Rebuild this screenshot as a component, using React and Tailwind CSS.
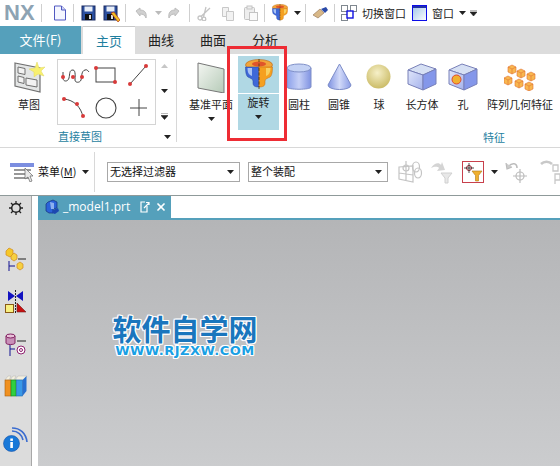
import { X } from 'lucide-react'

const font = { fontFamily: '"Noto Sans CJK SC", "Liberation Sans", sans-serif' }

// small filled dropdown triangle
function Caret({ className = '' }) {
  return (
    <svg width="7" height="4" viewBox="0 0 7 4" className={`shrink-0 ${className}`}>
      <path d="M0 0h7L3.5 4z" fill="#222" />
    </svg>
  )
}

function Sep({ className = '' }) {
  return <div className={`w-px h-[18px] bg-[#cfcfcf] shrink-0 ${className}`} />
}

// ---- quick access icons ----
function NewFile() {
  return (
    <svg width="14" height="16" viewBox="0 0 14 16" className="shrink-0">
      <path d="M1.5 1h7l4 4v10h-11z" fill="#f4f6ff" stroke="#5058c0" />
      <path d="M8.5 1v4h4" fill="#cfd6f5" stroke="#5058c0" />
    </svg>
  )
}
function Save({ pencil }) {
  return (
    <svg width="17" height="17" viewBox="0 0 17 17" className="shrink-0">
      <rect x="1" y="1" width="13" height="14" fill="#2b4f9e" stroke="#1a2a60" />
      <rect x="3.5" y="1.5" width="8" height="5" fill="#e8eef8" />
      <rect x="4" y="9" width="7" height="6" fill="#111" />
      <rect x="8" y="10" width="2" height="4" fill="#ddd" />
      {pencil && <path d="M8 8l3-1 6 8-2 2z" fill="#f0c020" stroke="#b03020" strokeWidth=".7" />}
    </svg>
  )
}
function Undo({ flip }) {
  return (
    <svg width="14" height="14" viewBox="0 0 14 14" className={flip ? 'shrink-0 -scale-x-100' : 'shrink-0'}>
      <path d="M2 5l4-3v2c4 0 7 2 6 8-1-3-3-4-6-4v2z" fill="#d0d0d0" stroke="#bdbdbd" />
    </svg>
  )
}
function Scissors() {
  return (
    <svg width="15" height="15" viewBox="0 0 15 15" fill="none" stroke="#c4c4c4" strokeWidth="1.3" className="shrink-0">
      <circle cx="3" cy="12" r="2" /><circle cx="7" cy="13" r="1.8" />
      <path d="M4 10.5L13 2M6.5 11L9 1" />
    </svg>
  )
}
function Copy() {
  return (
    <svg width="14" height="15" viewBox="0 0 14 15" fill="#f2f2f2" stroke="#c8c8c8" className="shrink-0">
      <path d="M1.5 1.5h6v9h-6z" /><path d="M5.5 5.5h7v9h-7z" />
    </svg>
  )
}
function Paste() {
  return (
    <svg width="15" height="16" viewBox="0 0 15 16" fill="#eee" stroke="#c4c4c4" className="shrink-0">
      <rect x="1.5" y="2.5" width="10" height="12" rx="1" /><rect x="4" y="1" width="5" height="3" />
      <rect x="6.5" y="7.5" width="8" height="8" fill="#fafafa" />
    </svg>
  )
}
function Revolve({ size = 28 }) {
  return (
    <svg width={size} height={size * 31 / 28} viewBox="0 0 28 31" className="shrink-0">
      <ellipse cx="14" cy="6" rx="13.500" ry="5.500" fill="#f2a53a" stroke="#b8641a" strokeWidth=".6" />
      <ellipse cx="14" cy="5" rx="7" ry="2.500" fill="#e0552a" />
      <path d="M.5 8H14v20c-4 0-6-1-6-4v-2c0-2-3-3-5-4C1 17 .5 12 .5 8z" fill="#3e68d8" stroke="#24409c" strokeWidth=".5" />
      <path d="M2.500 9H7v8c-3-1-4.500-3-4.500-8z" fill="#a8c2f4" />
      <path d="M14 8h13.500c0 4-.5 9-2.500 10-2 1-5 2-5 4v2c0 3-2 4-6 4z" fill="#f5a020" stroke="#c06a14" strokeWidth=".5" />
      <path d="M21 9h4.500c0 4-1.500 7-4.500 8z" fill="#f8d060" />
      <path d="M14 0v31" stroke="#4a3a10" strokeWidth=".8" strokeDasharray="3 1.500" />
    </svg>
  )
}
function Brush() {
  return (
    <svg width="17" height="14" viewBox="0 0 17 14" className="shrink-0">
      <path d="M1 9l7-6 4 4-6 5z" fill="#d8b888" stroke="#907050" strokeWidth=".6" />
      <path d="M9 3l5-2 2 3-3 3z" fill="#2a4aa8" />
    </svg>
  )
}
function SwitchWin() {
  return (
    <svg width="16" height="16" viewBox="0 0 16 16" fill="#fff" className="shrink-0">
      <rect x=".5" y=".5" width="6" height="6" stroke="#808890" />
      <rect x="9.5" y=".5" width="6" height="6" stroke="#808890" />
      <rect x=".5" y="9.5" width="6" height="6" stroke="#808890" />
      <rect x="6" y="6" width="6" height="7" stroke="#1010e0" strokeWidth="1.4" />
    </svg>
  )
}
function WinIcon() {
  return (
    <svg width="15" height="16" viewBox="0 0 15 16" className="shrink-0">
      <defs><linearGradient id="wn" x1="0" y1="0" x2="1" y2="1"><stop offset="0" stopColor="#9fc4e8" /><stop offset="1" stopColor="#fff" /></linearGradient></defs>
      <rect x=".5" y=".5" width="14" height="15" fill="url(#wn)" stroke="#0c0ce8" />
      <rect x="1" y="1" width="13" height="2" fill="#2030a8" />
    </svg>
  )
}

// ---- ribbon icons ----
function SketchIcon() {
  return (
    <svg width="31" height="31" viewBox="0 0 31 31" className="shrink-0">
      <path d="M1 1l25 5v24L1 24z" fill="#e4e6e6" stroke="#707070" strokeWidth="1.200" />
      <path d="M4 5l7 1.500v6L4 11zM4 14l6 1.500v6L4 20zM12 16l11 2v7l-11-2z" fill="#f2f2f2" stroke="#707070" />
      <path d="M23 0l2 6 6-1-4 4 3 5-6-2-4 3 0-5-5-3 6-1z" fill="#f8f070" stroke="#e0d860" strokeWidth=".5" />
    </svg>
  )
}
function Dot({ x, y }) {
  return <circle cx={x} cy={y} r="2" fill="#d83a3a" />
}
function Gallery() {
  const S = { fill: 'none', stroke: '#444', strokeWidth: 1 }
  return (
    <svg width="97" height="64" viewBox="0 0 97 64" className="block">
      <path d="M5 12v6c0 4 5 4 6 0 1-4 0-8 4-8 3 0 2 8 2 10 0 3 5 3 6 0 1-3 0-9 4-10 2-1 3 1 4 2" {...S} />
      <Dot x={5} y={17} /><Dot x={15} y={17} /><Dot x={24} y={17} />
      <rect x="38" y="8" width="19" height="14" {...S} />
      <Dot x={38} y={8} /><Dot x={57} y={22} />
      <path d="M72 24L88 6" {...S} />
      <Dot x={72} y={24} /><Dot x={88} y={6} />
      <path d="M6 39c10 1 17 8 19 18" {...S} />
      <Dot x={6} y={39} /><Dot x={19} y={44} /><Dot x={25} y={56} />
      <circle cx="48" cy="48" r="10" {...S} strokeWidth="1.100" />
      <path d="M81 39v17M72 48h17" {...S} />
    </svg>
  )
}
function PlaneIcon() {
  return (
    <svg width="28" height="31" viewBox="0 0 28 31" className="shrink-0">
      <defs><linearGradient id="pl" x1="0" y1="0" x2="1" y2="1"><stop offset="0" stopColor="#f4f6f2" /><stop offset="1" stopColor="#b6cbb8" /></linearGradient></defs>
      <path d="M1 1l26 6v24L1 26z" fill="url(#pl)" stroke="#777" />
    </svg>
  )
}
function Cylinder() {
  return (
    <svg width="26" height="29" viewBox="0 0 26 29" className="shrink-0">
      <defs><linearGradient id="cy" x1="0" y1="0" x2="1" y2="0"><stop offset="0" stopColor="#8ba0ea" /><stop offset=".5" stopColor="#c6d0f6" /><stop offset="1" stopColor="#7f92e2" /></linearGradient></defs>
      <path d="M1 5v19c0 3 24 3 24 0V5z" fill="url(#cy)" stroke="#8090c8" />
      <ellipse cx="13" cy="5" rx="12" ry="4" fill="#c4d2f4" stroke="#8090c8" />
    </svg>
  )
}
function Cone() {
  return (
    <svg width="25" height="28" viewBox="0 0 25 28" className="shrink-0">
      <defs><linearGradient id="co" x1="0" y1="0" x2="1" y2="0"><stop offset="0" stopColor="#7e92e2" /><stop offset=".5" stopColor="#d2daf8" /><stop offset="1" stopColor="#8a9ce6" /></linearGradient></defs>
      <path d="M12.5 1L1 22c0 6 23 6 23 0z" fill="url(#co)" stroke="#7c8cc8" />
    </svg>
  )
}
function Sphere() {
  return (
    <svg width="26" height="26" viewBox="0 0 26 26" className="shrink-0">
      <defs><radialGradient id="sp" cx=".45" cy=".35" r=".7"><stop offset="0" stopColor="#f6f0c8" /><stop offset="1" stopColor="#c8b860" /></radialGradient></defs>
      <circle cx="12.5" cy="12.5" r="12" fill="url(#sp)" />
    </svg>
  )
}
function Block({ hole }) {
  return (
    <svg width="30" height="28" viewBox="0 0 30 28" className="shrink-0">
      <defs><linearGradient id="bl" x1="0" y1="0" x2="1" y2="1"><stop offset="0" stopColor="#e0e6fa" /><stop offset="1" stopColor="#a4b2ec" /></linearGradient></defs>
      <path d="M1 7l13-6 15 5-13 6z" fill="#d6e0f4" stroke="#7880b8" />
      <path d="M1 7l15 5v15L1 21z" fill="url(#bl)" stroke="#7880b8" />
      <path d="M16 12l13-6v15l-13 6z" fill="#8497ea" stroke="#7880b8" />
      {hole && <circle cx="8.5" cy="16.5" r="4.5" fill="#f0b030" stroke="#e04830" />}
    </svg>
  )
}
function Cube({ x, y }) {
  return (
    <g transform={`translate(${x} ${y})`}>
      <path d="M0 2l4-2 4 2v5l-4 2-4-2z" fill="#f8b850" stroke="#e07030" strokeWidth=".6" />
      <path d="M0 2l4 2 4-2M4 4v5" fill="none" stroke="#e07030" strokeWidth=".6" />
    </g>
  )
}
function PatternIcon() {
  return (
    <svg width="32" height="27" viewBox="0 0 32 27" className="shrink-0">
      <Cube x={4} y={1} /><Cube x={13} y={5} /><Cube x={23} y={8} />
      <Cube x={0} y={12} /><Cube x={11} y={15} /><Cube x={21} y={18} />
    </svg>
  )
}

function RibbonBtn({ width, icon, label }) {
  return (
    <div className="flex flex-col items-center shrink-0" style={{ width }}>
      <div className="h-[36px] flex items-center justify-center">{icon}</div>
      <div className="text-[11px] leading-[16px] mt-[1px] whitespace-nowrap text-[#222]">{label}</div>
    </div>
  )
}

// ---- selection bar icons ----
function MenuIcon() {
  return (
    <svg width="25" height="20" viewBox="0 0 25 20" className="shrink-0">
      <rect x="0" y="1" width="24" height="4" fill="#7c8ee0" />
      <path d="M4 8h17M4 12h15M4 16h15" stroke="#777" strokeWidth="1.400" />
      <path d="M15 6l8 8h-3l2 5-2 1-2-5-3 2z" fill="#e8e8e8" stroke="#666" strokeWidth=".7" />
    </svg>
  )
}
function FadedSnap() {
  return (
    <svg width="25" height="24" viewBox="0 0 25 24" fill="none" stroke="#c4c4c4" strokeWidth="1.200" className="shrink-0">
      <path d="M1 7l14-1v16L1 19zM1 13l14 2M8 1v20" />
      <circle cx="8" cy="8" r="3" />
      <ellipse cx="18" cy="7" rx="3.500" ry="5" /><ellipse cx="20" cy="13" rx="3.500" ry="5" />
    </svg>
  )
}
function FadedFilter() {
  return (
    <svg width="23" height="24" viewBox="0 0 23 24" className="shrink-0">
      <path d="M1 8c3-5 8-6 10-3l1-3 3 8-8 1 2-3c-2-2-5-1-8 0z" fill="#d4d4d4" />
      <path d="M11 13h11l-4 5v5h-3v-5z" fill="#e8e8e8" stroke="#d0d0d0" />
    </svg>
  )
}
function ActiveFilter() {
  return (
    <div className="w-[22px] h-[22px] border border-[#c8404c] flex items-center justify-center shrink-0">
      <svg width="20" height="20" viewBox="0 0 20 20">
        <circle cx="6" cy="6" r="2.500" fill="none" stroke="#a02030" />
        <path d="M6 1v10M1 6h10" stroke="#222" strokeWidth=".8" />
        <path d="M9 9h10l-3.500 4.500V19h-3v-5.500z" fill="#f0b030" stroke="#b07818" strokeWidth=".6" />
      </svg>
    </div>
  )
}
function FadedUndoSnap() {
  return (
    <svg width="24" height="24" viewBox="0 0 24 24" fill="none" stroke="#bcbcbc" strokeWidth="1.200" className="shrink-0">
      <path d="M3 7c4-5 9-4 9 1" strokeWidth="1.600" /><path d="M1 3l1 6 5-2" fill="#ccc" />
      <circle cx="15" cy="16" r="4" /><path d="M15 9v14M8 16h14" />
    </svg>
  )
}
function FadedChain() {
  return (
    <svg width="20" height="24" viewBox="0 0 20 24" fill="none" stroke="#c8c8c8" strokeWidth="1.300" className="shrink-0">
      <path d="M1 4c3-3 8-3 11 0" strokeWidth="2.500" />
      <path d="M13 5h5v6h-5zM15 14h5v6h-5zM15 20v4" />
    </svg>
  )
}

function Select({ width, label }) {
  return (
    <div className="h-[20px] border border-[#a8a8a8] bg-white flex items-center justify-between pl-[2px] pr-[5px] text-[11px] text-[#111] shrink-0" style={{ width }}>
      <span className="leading-none whitespace-nowrap">{label}</span>
      <Caret />
    </div>
  )
}

// ---- left rail icons ----
function Gear() {
  return (
    <svg width="14" height="14" viewBox="0 0 14 14" fill="none" stroke="#222">
      <circle cx="7" cy="7" r="4.300" strokeWidth="1.500" />
      <path d="M7 0v3M7 11v3M0 7h3M11 7h3M2 2l2 2M10 10l2 2M12 2l-2 2M2 12l2-2" strokeWidth="1.300" />
    </svg>
  )
}
function AssemblyNav() {
  return (
    <svg width="22" height="25" viewBox="0 0 22 25">
      <path d="M1 4l3-3 4 2v5l-3 2-4-2z" fill="#f6c828" stroke="#d08a20" strokeWidth=".7" />
      <path d="M6 9l3-3 3 2v4l-3 2-3-2z" fill="#f6d040" stroke="#d08a20" strokeWidth=".7" />
      <path d="M12 17l3-2 3 2v4l-3 2-3-2z" fill="#f6d040" stroke="#d08a20" strokeWidth=".7" />
      <path d="M4 14v10M4 19h6" stroke="#111190" fill="none" />
      <path d="M13 12h8" stroke="#222" />
    </svg>
  )
}
function Constraint() {
  return (
    <svg width="22" height="23" viewBox="0 0 22 23">
      <path d="M3 1l7 5-7 5zM18 1l-7 5 7 5z" fill="#1212c0" />
      <path d="M10.500 0v23" stroke="#222" strokeDasharray="2 1" />
      <rect x=".5" y="14.500" width="8" height="8" fill="#f8f080" stroke="#8a5a18" />
      <path d="M12 13l9 9h-9z" fill="#c81010" stroke="#702020" strokeWidth=".6" />
    </svg>
  )
}
function PartNav() {
  return (
    <svg width="22" height="23" viewBox="0 0 22 23">
      <path d="M1 3v7c0 2 9 2 9 0V3z" fill="#c890b8" stroke="#802060" />
      <ellipse cx="5.500" cy="3" rx="4.500" ry="2" fill="#e8c0d8" stroke="#802060" />
      <path d="M12 8h9" stroke="#222" />
      <path d="M5 12v11M5 16h5" stroke="#111190" fill="none" />
      <circle cx="16" cy="17" r="4" fill="#fff" stroke="#902070" />
      <circle cx="16" cy="17" r="1.500" fill="#fff" stroke="#902070" />
    </svg>
  )
}
function Books() {
  return (
    <svg width="24" height="22" viewBox="0 0 24 22">
      <path d="M1 5l3-4h3l-2 4zM6 5l3-4h3l-2 4zM11 5l3-4h9l-3 4z" fill="#f4f0e0" stroke="#aaa" strokeWidth=".4" />
      <rect x="1" y="5" width="6" height="16" fill="#f09020" stroke="#a86010" strokeWidth=".6" />
      <rect x="7" y="5" width="5" height="16" fill="#30d040" stroke="#188020" strokeWidth=".6" />
      <rect x="12.500" y="5" width="6" height="16" fill="#3898e8" stroke="#1868b0" strokeWidth=".6" />
      <path d="M18.500 5l4-4v15l-4 5z" fill="#2870d0" />
    </svg>
  )
}
function InfoFeed() {
  return (
    <svg width="25" height="25" viewBox="0 0 25 25">
      <path d="M9 4c6 0 10 4 11 9M9 1c8 0 14 5 15 14" fill="none" stroke="#3a6cd0" strokeWidth="1.600" />
      <circle cx="8.500" cy="16.500" r="8" fill="#1878d8" stroke="#1450a8" strokeWidth=".6" />
      <rect x="7.300" y="15" width="2.600" height="6" fill="#fff" />
      <rect x="7.300" y="11.500" width="2.600" height="2.400" fill="#fff" />
    </svg>
  )
}
function PartTabIcon() {
  return (
    <svg width="15" height="16" viewBox="0 0 15 16" className="shrink-0">
      <path d="M3 3l5-2 4 2v6l-4 1v4H4l-3-2V5z" fill="#2a62d8" stroke="#16307c" strokeWidth=".7" />
      <path d="M5 3l4 1v6H6z" fill="#8cb0f0" />
      <path d="M8 11l5-2 1 3-4 3-3-1z" fill="#1c48b0" />
    </svg>
  )
}
function PopOut() {
  return (
    <svg width="10" height="12" viewBox="0 0 10 12" fill="none" stroke="#fff" strokeWidth="1.200" className="shrink-0">
      <path d="M7 5v6H1V1h4" /><path d="M4 7l5-5M6 1.500h3V4" />
    </svg>
  )
}

const outline = '[text-shadow:1px_0_#fff,-1px_0_#fff,0_1px_#fff,0_-1px_#fff,1px_1px_#fff,-1px_-1px_#fff,1px_-1px_#fff,-1px_1px_#fff]'

export default function App() {
  return (
    <div className="relative w-[560px] h-[466px] overflow-hidden bg-white flex flex-col" style={font}>
      {/* quick access bar */}
      <div className="h-[26px] flex items-center shrink-0 text-[11px] text-[#222]">
        <span className="w-[41px] shrink-0 pl-[4px] text-[22px] font-bold leading-none text-[#8da3b3]" style={{ fontFamily: '"Liberation Sans", sans-serif' }}>NX</span>
        <Sep />
        <div className="ml-[11px]"><NewFile /></div>
        <Sep className="ml-[6px]" />
        <div className="ml-[7px]"><Save /></div>
        <div className="ml-[5px]"><Save pencil /></div>
        <Sep className="ml-[5px]" />
        <div className="ml-[8px]"><Undo /></div>
        <Caret className="ml-[7px] opacity-30" />
        <div className="ml-[5px]"><Undo flip /></div>
        <Sep className="ml-[8px]" />
        <div className="ml-[7px]"><Scissors /></div>
        <div className="ml-[9px]"><Copy /></div>
        <div className="ml-[8px]"><Paste /></div>
        <Sep className="ml-[6px]" />
        <div className="ml-[7px]"><Revolve size={16} /></div>
        <Caret className="ml-[6px]" />
        <Sep className="ml-[4px]" />
        <div className="ml-[6px]"><Brush /></div>
        <Sep className="ml-[5px]" />
        <div className="ml-[6px]"><SwitchWin /></div>
        <span className="ml-[5px] w-[44px] shrink-0 whitespace-nowrap">切换窗口</span>
        <div className="ml-[6px]"><WinIcon /></div>
        <span className="ml-[5px] w-[22px] shrink-0 whitespace-nowrap">窗口</span>
        <Caret className="ml-[5px]" />
        <svg width="7" height="6" viewBox="0 0 7 6" className="ml-[4px] shrink-0"><path d="M0 0h7M0 2h7L3.500 6 0 2z" stroke="#222" strokeWidth=".6" fill="#222" /></svg>
      </div>

      {/* tabs */}
      <div className="h-[28px] bg-[#dcdcdc] flex text-[13px] shrink-0 text-[#222]">
        <div className="w-[81px] bg-[#55a0bb] text-white flex items-center justify-center">文件(F)</div>
        <div className="ml-[2px] w-[52px] bg-white border-t border-[#c8c8c8] text-[#1f7f9f] flex items-center justify-center">主页</div>
        <div className="w-[52px] flex items-center justify-center">曲线</div>
        <div className="w-[52px] flex items-center justify-center">曲面</div>
        <div className="w-[52px] flex items-center justify-center">分析</div>
      </div>

      {/* ribbon */}
      <div className="h-[94px] shrink-0 border-b border-[#d8d8d8] flex relative">
        <div className="w-[177px] shrink-0 border-r border-[#d8d8d8] my-[5px] flex flex-col">
          <div className="flex h-[66px]">
            <div className="w-[57px] shrink-0">
              <div className="ml-[6px] w-[46px]"><RibbonBtn width={46} icon={<SketchIcon />} label="草图" /></div>
            </div>
            <div className="w-[99px] h-[66px] shrink-0 border border-[#d4d4d4]"><Gallery /></div>
            <div className="ml-[5px] flex flex-col items-center justify-between py-[5px] w-[7px]">
              <Caret className="rotate-180 opacity-25" />
              <Caret />
              <svg width="7" height="7" viewBox="0 0 7 7"><path d="M0 0h7M0 2.500h7L3.500 6.500z" stroke="#222" strokeWidth=".6" fill="#222" /></svg>
            </div>
          </div>
          <div className="flex items-center mt-[6px] h-[16px]">
            <span className="ml-[58px] w-[106px] text-[11px] leading-none text-[#1f7f9f]">直接草图</span>
            <Caret />
          </div>
        </div>
        <div className="flex-1 flex flex-col min-w-0">
          <div className="flex h-[76px] pt-[2px]">
            <div className="w-[58px] ml-[5px] shrink-0 flex flex-col items-center pt-[3px]">
              <RibbonBtn width={58} icon={<PlaneIcon />} label="基准平面" />
              <Caret className="mt-[5px]" />
            </div>
            <div className="w-[41px] ml-[-2px] h-[74px] bg-[#b0d8e4] flex flex-col items-center shrink-0">
              <div className="h-[38px] w-full flex items-center justify-center border-b border-white"><Revolve /></div>
              <div className="text-[11px] leading-[16px] text-[#222]">旋转</div>
              <Caret className="mt-[5px]" />
            </div>
            <div className="flex pt-[3px]">
              <RibbonBtn width={40} icon={<Cylinder />} label="圆柱" />
              <RibbonBtn width={40} icon={<Cone />} label="圆锥" />
              <RibbonBtn width={40} icon={<Sphere />} label="球" />
              <RibbonBtn width={46} icon={<Block />} label="长方体" />
              <RibbonBtn width={36} icon={<Block hole />} label="孔" />
              <RibbonBtn width={78} icon={<PatternIcon />} label="阵列几何特征" />
            </div>
          </div>
          <div className="mt-[2px] h-[16px] pl-[306px] text-[11px] leading-none text-[#1f7f9f]">特征</div>
        </div>
      </div>

      {/* selection bar */}
      <div className="h-[48px] shrink-0 border-b border-[#8f9a9a] flex items-center text-[#111]">
        <div className="ml-[10px]"><MenuIcon /></div>
        <span className="ml-[3px] w-[41px] shrink-0 text-[11px] whitespace-nowrap">菜单(<span className="underline">M</span>)</span>
        <Caret className="ml-[3px]" />
        <div className="ml-[5px] w-px h-[40px] bg-[#d8d8d8] shrink-0" />
        <div className="ml-[12px]"><Select width={133} label="无选择过滤器" /></div>
        <div className="ml-[8px]"><Select width={140} label="整个装配" /></div>
        <div className="ml-[10px]"><FadedSnap /></div>
        <div className="ml-[7px]"><FadedFilter /></div>
        <div className="ml-[9px]"><ActiveFilter /></div>
        <Caret className="ml-[7px]" />
        <div className="ml-[7px]"><FadedUndoSnap /></div>
        <div className="ml-[11px]"><FadedChain /></div>
      </div>

      {/* workspace */}
      <div className="flex-1 flex min-h-0">
        <div className="w-[32px] shrink-0 bg-[#dcdcdc] border-r border-[#a8a8a8] flex flex-col items-center">
          <div className="mt-[5px]"><Gear /></div>
          <div className="mt-[32px]"><AssemblyNav /></div>
          <div className="mt-[18px]"><Constraint /></div>
          <div className="mt-[20px]"><PartNav /></div>
          <div className="mt-[19px]"><Books /></div>
          <div className="mt-[30px]"><InfoFeed /></div>
        </div>
        <div className="w-[6px] shrink-0 bg-white" />
        <div className="flex-1 flex flex-col min-w-0">
          <div className="h-[22px] shrink-0 flex">
            <div className="w-[133px] bg-[#55a0bb] text-white flex items-center pl-[7px]">
              <PartTabIcon />
              <span className="ml-[3px] w-[72px] shrink-0 text-[12px] whitespace-nowrap" style={{ fontFamily: '"Open Sans", sans-serif' }}>_model1.prt</span>
              <div className="ml-[5px]"><PopOut /></div>
              <X size={12} strokeWidth={3.5} className="ml-[5px] shrink-0" />
            </div>
          </div>
          <div className="h-[2px] shrink-0 bg-[#55a0bb]" />
          <div className="flex-1 bg-gradient-to-b from-[#b4b5b7] to-[#cbccce] relative">
            {/* site watermark */}
            <div className="absolute left-[74px] top-[92px] flex flex-col items-center w-[146px]">
              <div className={`text-[29px] leading-[33px] font-bold text-[#1a76bd] whitespace-nowrap ${outline}`}>软件自学网</div>
              <div className={`text-[13px] leading-[12px] font-bold text-[#1aa0e4] whitespace-nowrap tracking-[0.5px] ${outline}`} style={{ fontFamily: '"DejaVu Sans", sans-serif' }}>WWW.RJZXW.COM</div>
            </div>
          </div>
        </div>
      </div>

      {/* annotation box round the revolve command */}
      <div className="absolute left-[227px] top-[46px] w-[60px] h-[95px] border-[3px] border-[#ee2c34] pointer-events-none" />
    </div>
  )
}
